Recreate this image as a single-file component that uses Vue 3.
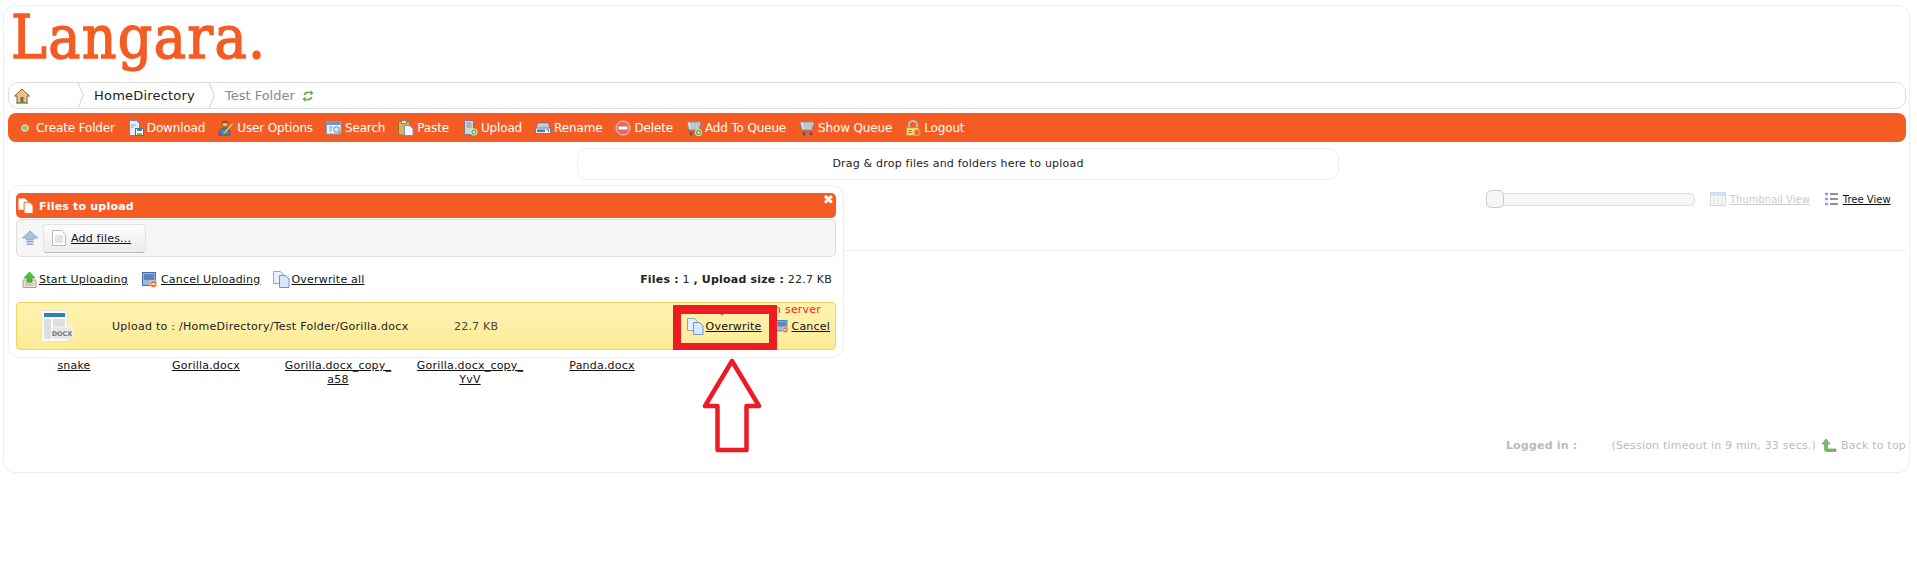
<script setup>
const tools = [
  { icon: 'dot', label: 'Create Folder' },
  { icon: 'download', label: 'Download' },
  { icon: 'user', label: 'User Options' },
  { icon: 'search', label: 'Search' },
  { icon: 'paste', label: 'Paste' },
  { icon: 'upload', label: 'Upload' },
  { icon: 'rename', label: 'Rename' },
  { icon: 'delete', label: 'Delete' },
  { icon: 'cartadd', label: 'Add To Queue' },
  { icon: 'cart', label: 'Show Queue' },
  { icon: 'lock', label: 'Logout' }
]

const files = [
  ['snake'],
  ['Gorilla.docx'],
  ['Gorilla.docx_copy_', 'a58'],
  ['Gorilla.docx_copy_', 'YvV'],
  ['Panda.docx']
]
</script>

<template>
  <svg class="sprite" aria-hidden="true">
    <defs>
      <symbol id="dot" viewBox="0 0 16 16">
        <rect x="5" y="5" width="6" height="6" rx="2" fill="#8fc96f" stroke="#e8f4d8" />
      </symbol>
      <symbol id="download" viewBox="0 0 16 16">
        <path d="M1.500.5h7l3 3v12h-10z" fill="#e4eefb" stroke="#5b8ac6" />
        <path d="M3 5h5M3 7h3" stroke="#7da4d8" />
        <rect x="7.500" y="8.500" width="8" height="7" fill="#fff" stroke="#3f74b5" />
        <rect x="9" y="9" width="5" height="2" fill="#4a7fc1" />
        <rect x="9" y="13" width="5" height="2" fill="#7cc04f" />
      </symbol>
      <symbol id="user" viewBox="0 0 16 16">
        <circle cx="7" cy="4" r="3" fill="#e9b77f" stroke="#8a5a2b" />
        <path d="M5 1.500h5L9 3H5z" fill="#7a4a1f" />
        <path d="M1 15c0-5 2.500-7 6-7s5 2 5 7z" fill="#4a7fc1" stroke="#2c5a94" />
        <path d="M15.500 4l-8 9-2.500 2 1-3 8-9z" fill="#f6cf55" stroke="#a87a1c" stroke-width=".7" />
      </symbol>
      <symbol id="search" viewBox="0 0 16 16">
        <rect x=".5" y="1.500" width="14.500" height="12.500" fill="#f2f6fc" stroke="#7a9cc8" />
        <rect x="1" y="2" width="13.500" height="3" fill="#6c98d0" />
        <path d="M3 7h4M3 9h3M3 11h3" stroke="#7a9cc8" />
        <circle cx="10.500" cy="9.500" r="2.800" fill="#dcebf9" stroke="#6a7f96" />
        <path d="M12.500 11.500l3 3" stroke="#8c8f7f" stroke-width="1.400" />
      </symbol>
      <symbol id="paste" viewBox="0 0 16 16">
        <rect x=".5" y="1.500" width="11" height="13.500" rx="1" fill="#dcae66" stroke="#9c6e2a" />
        <rect x="3.500" y=".5" width="5" height="3" fill="#e6e1cf" stroke="#8d8470" />
        <path d="M6.500 5.500h5l3.500 3v7h-8.500z" fill="#f4f8fe" stroke="#6c93c9" />
      </symbol>
      <symbol id="upload" viewBox="0 0 16 16">
        <rect x="2.500" y=".5" width="9" height="14" rx="1" fill="#cfd3d8" stroke="#737a82" />
        <path d="M4.500 3h5M4.500 5h5M4.500 7h5" stroke="#8b929a" />
        <circle cx="12" cy="12" r="3.200" fill="#58a83c" stroke="#e4f3da" />
        <path d="M10.500 12h3M12 10.500v3" stroke="#fff" />
      </symbol>
      <symbol id="rename" viewBox="0 0 16 16">
        <path d="M.5 11l2-8h11l2 8z" fill="#d5dce4" stroke="#6f7b88" />
        <rect x="3" y="5" width="10" height="2" fill="#bfc8d2" />
        <rect x=".5" y="8" width="15" height="5.500" fill="#eef1f4" stroke="#6f7b88" />
        <rect x="2" y="9.500" width="8" height="2.500" fill="#4a79b3" />
        <path d="M11.500 9.500h2v2.500" fill="none" stroke="#6f7b88" />
      </symbol>
      <symbol id="delete" viewBox="0 0 16 16">
        <circle cx="8" cy="8" r="7" fill="#e06a66" stroke="#f5cfc8" />
        <rect x="3.500" y="6.500" width="9" height="3" fill="#fff" />
      </symbol>
      <symbol id="cart" viewBox="0 0 16 16">
        <path d="M1 2h14l-2 8H3z" fill="#dfe4e8" stroke="#7f8a93" />
        <path d="M3.500 4h10M4 6h9M4.500 8h8M6 2v8M9 2v8M12 2v8" stroke="#98a2aa" stroke-width=".6" />
        <path d="M3 10l.5 2h10" fill="none" stroke="#6a737b" />
        <circle cx="5" cy="14" r="1.400" fill="#4b5359" />
        <circle cx="12" cy="14" r="1.400" fill="#4b5359" />
      </symbol>
      <symbol id="cartadd" viewBox="0 0 16 16">
        <use href="#cart" width="16" height="16" />
        <circle cx="12.500" cy="12.500" r="3.200" fill="#58a83c" stroke="#e4f3da" />
        <path d="M11 12.500h3M12.500 11v3" stroke="#fff" />
      </symbol>
      <symbol id="lock" viewBox="0 0 16 16">
        <path d="M4 8V5a4 4 0 0 1 8 0v3" fill="none" stroke="#b8bec4" stroke-width="2" />
        <rect x="1.500" y="7.500" width="12" height="8" fill="#f4d468" stroke="#c19a2b" />
        <path d="M3.500 10.500h3M3.500 12.500h3" stroke="#9c7a1c" />
        <circle cx="12" cy="12.500" r="3" fill="#e2701f" stroke="#f7c9a3" stroke-width=".6" />
      </symbol>
      <symbol id="pages" viewBox="0 0 17 17">
        <path d="M.5.500h7l3 3v9h-10z" fill="#e8f0fb" stroke="#86a8d6" />
        <path d="M6.500 4.500h6l3.500 3.500v8.500h-9.500z" fill="#dbe8f9" stroke="#6d94cc" />
      </symbol>
      <symbol id="cancel" viewBox="0 0 16 16">
        <rect x=".5" y=".5" width="13" height="13" fill="#9fb9d8" stroke="#3f6fa8" />
        <rect x="2" y="2" width="10" height="6" fill="#5b87bb" />
        <circle cx="11.500" cy="12" r="3.500" fill="#e2701f" stroke="#fff" stroke-width=".6" />
        <rect x="9.500" y="11.300" width="4" height="1.400" fill="#fff" />
      </symbol>
    </defs>
  </svg>

  <div class="frame">
    <div class="logo">Langara.</div>

    <div class="crumbs">
      <svg class="home" viewBox="0 0 16 16" width="16" height="16">
        <path d="M8 1L.5 8h2.500v6.500h10V8h2.500z" fill="#e8c48a" stroke="#8a5a2b" />
        <path d="M2 15h12" stroke="#5fa83c" stroke-width="1.500" />
        <rect x="6.500" y="9" width="3" height="5" fill="#7a6a4a" />
      </svg>
      <svg class="chev first" viewBox="0 0 7 30" width="7" height="27">
        <path d="M.5 0L6.500 15L.5 30" fill="none" stroke="#ccc" />
      </svg>
      <span class="crumb">HomeDirectory</span>
      <svg class="chev" viewBox="0 0 7 30" width="7" height="27">
        <path d="M.5 0L6.500 15L.5 30" fill="none" stroke="#ccc" />
      </svg>
      <span class="crumb current">Test Folder</span>
      <svg class="refresh" viewBox="0 0 12 14" width="12" height="14">
        <path d="M1.500 6C2 3 5 1.500 8.500 3V1L11.500 4 8.500 6.500V4.500C6 3.500 4 4.500 3.500 6z" fill="#6aa84f" />
        <path d="M10.500 8C10 11 7 12.500 3.500 11V13L.5 10 3.500 7.500V9.500C6 10.500 8 9.500 8.500 8z" fill="#6aa84f" />
      </svg>
    </div>

    <div class="toolbar">
      <a v-for="tool in tools" :key="tool.label" class="tool">
        <svg class="tool-icon" viewBox="0 0 16 16" width="16" height="16">
          <use :href="'#' + tool.icon" width="16" height="16" />
        </svg>
        {{ tool.label }}
      </a>
    </div>

    <div class="dropzone">Drag &amp; drop files and folders here to upload</div>

    <div class="views">
      <div class="slider"><span class="handle"></span></div>
      <a class="view dim">
        <svg viewBox="0 0 16 14" width="16" height="14">
          <rect x=".5" y=".5" width="15" height="13" fill="#f4f7fb" stroke="#cfdbea" />
          <rect x="1" y="1" width="14" height="3" fill="#d5e2f2" />
          <path d="M3 6h2M7 6h2M11 6h2M3 9h2M7 9h2M11 9h2M3 12h2M7 12h2M11 12h2" stroke="#eadfae" />
        </svg>
        <span>Thumbnail View</span>
      </a>
      <a class="view">
        <svg viewBox="0 0 14 14" width="14" height="14">
          <path d="M0 2h3M0 7h3M0 12h3" stroke="#7fa6dd" stroke-width="2.400" />
          <path d="M5 2h8M5 7h8M5 12h8" stroke="#222" />
        </svg>
        <span>Tree View</span>
      </a>
    </div>

    <div class="divider"></div>

    <div class="file-grid">
      <a v-for="(file, i) in files" :key="i" class="file">
        <span v-for="line in file" :key="line">{{ line }}</span>
      </a>
    </div>

    <div class="footer">
      <b>Logged in :</b>
      <span class="session">(Session timeout in 9 min, 33 secs.)</span>
      <svg viewBox="0 0 16 14" width="16" height="14">
        <path d="M5 1L1 6h2.500v5.500a2 2 0 0 0 2 2H15v-2.500H7.500a1 1 0 0 1-1-1V6H9z" fill="#7dbb6a" stroke="#4d9440" stroke-width=".6" />
      </svg>
      <span>Back to top</span>
    </div>

    <div class="uploader">
      <div class="up-title">
        <svg viewBox="0 0 17 17" width="16" height="16">
          <path d="M.5.500h7l3 3v9h-10z" fill="#fff" />
          <path d="M6.500 4.500h6l3.500 3.500v8.500h-9.500z" fill="#fff" stroke="#f45c24" />
        </svg>
        Files to upload
        <span class="close">✖</span>
      </div>
      <div class="up-bar">
        <svg viewBox="0 0 16 16" width="16" height="16">
          <path d="M8 1L.5 8h4v2h7V8h4z" fill="#a9c2de" stroke="#8fa9c6" />
          <rect x="4.500" y="11" width="7" height="1.500" fill="#8fa9c6" />
          <rect x="4.500" y="13.500" width="7" height="1.500" fill="#8fa9c6" />
        </svg>
        <a class="add-btn">
          <svg viewBox="0 0 14 16" width="14" height="16">
            <path d="M.5.500h9l4 4v11H.5z" fill="#fff" stroke="#bbb" />
            <path d="M3 6h8M3 8h8M3 10h8M3 12h8" stroke="#ccc" />
          </svg>
          <span>Add files...</span>
        </a>
      </div>
      <div class="up-actions">
        <a class="act">
          <svg viewBox="0 0 15 17" width="15" height="17">
            <path d="M1 9h13v7.500H1z" fill="#ece7d6" stroke="#a8a08a" />
            <path d="M3 12h9M3 14h9" stroke="#b8b09a" />
            <path d="M7.500 1L2 7h3v4h5V7h3z" fill="#4cc02e" stroke="#2e8f1a" stroke-width=".6" />
          </svg>
          <span>Start Uploading</span>
        </a>
        <a class="act wide cancel-all">
          <svg viewBox="0 0 16 16" width="16" height="16"><use href="#cancel" width="16" height="16" /></svg>
          <span>Cancel Uploading</span>
        </a>
        <a class="act overwrite-all">
          <svg viewBox="0 0 17 17" width="17" height="17"><use href="#pages" width="17" height="17" /></svg>
          <span>Overwrite all</span>
        </a>
        <div class="totals"><b>Files :</b> 1 <b>, Upload size :</b> 22.7 KB</div>
      </div>
      <div class="up-item">
        <svg class="doc" viewBox="0 0 32 32" width="32" height="32">
          <rect x=".5" y=".5" width="26" height="31" rx="1" fill="#fafafa" stroke="#e2e2e2" />
          <rect x="3" y="3" width="21" height="4" fill="#2d84a8" />
          <rect x="3" y="9" width="7" height="20" fill="#dedede" />
          <rect x="12" y="9" width="12" height="8" fill="#dedede" />
          <rect x="11" y="17" width="20.500" height="12" rx="3" fill="#e6e6e6" stroke="#f5f5f5" />
          <text x="21" y="26" class="doc-ext">DOCX</text>
        </svg>
        <span class="path">Upload to : /HomeDirectory/Test Folder/Gorilla.docx</span>
        <span class="size">22.7 KB</span>
        <div class="item-side">
          <div class="exists">Already exists on server</div>
          <div class="item-acts">
            <a class="act">
              <svg viewBox="0 0 17 17" width="17" height="17"><use href="#pages" width="17" height="17" /></svg>
              <span>Overwrite</span>
            </a>
            <a class="act wide">
              <svg viewBox="0 0 16 16" width="13" height="13"><use href="#cancel" width="16" height="16" /></svg>
              <span>Cancel</span>
            </a>
          </div>
        </div>
      </div>
    </div>

    <div class="mark-box"></div>
    <svg class="mark-arrow" viewBox="0 0 60 96" width="60" height="96">
      <path d="M30 3L3 48H15.500V92H44.500V48H57z" fill="#fff" stroke="#ed1c24" stroke-width="4.500" stroke-linejoin="round" />
    </svg>
  </div>
</template>

<style>
body {
  background: #fff;
}
</style>

<style scoped>
.sprite {
  position: absolute;
  width: 0;
  height: 0;
}

.frame {
  position: relative;
  box-sizing: border-box;
  width: 1907px;
  height: 468px;
  margin: 5px 0 0 3px;
  padding: 0 3px 0 4px;
  border: 1px solid #eee;
  border-radius: 12px;
  font-family: "DejaVu Sans", Verdana, sans-serif;
  font-size: 11px;
  letter-spacing: 0.2px;
  color: #222;
}

a {
  color: #111;
}

.logo {
  height: 76px;
  padding-left: 3px;
  font-family: "DejaVu Serif Condensed", "DejaVu Serif", serif;
  font-size: 60px;
  line-height: 62px;
  letter-spacing: 1.35px;
  -webkit-text-stroke: 1.4px #f45c24;
  color: #f45c24;
}

.crumbs {
  display: flex;
  align-items: center;
  box-sizing: border-box;
  height: 27px;
  padding-left: 5px;
  border: 1px solid #ddd;
  border-radius: 10px;
  font-size: 13px;
  overflow: hidden;
}

.chev.first {
  margin-left: 47px;
}

.crumb {
  margin: 0 13px 0 10px;
}

.crumb.current {
  margin-right: 7px;
  letter-spacing: 0;
  color: #888;
}

.toolbar {
  display: flex;
  align-items: center;
  gap: 13px;
  height: 29px;
  margin-top: 4px;
  padding-left: 9px;
  border-radius: 8px;
  background: #f45c24;
  font-size: 12px;
  letter-spacing: -0.15px;
  color: #fff;
}

.tool {
  display: flex;
  align-items: center;
  gap: 3px;
  color: #fff;
  white-space: nowrap;
}

.dropzone {
  box-sizing: border-box;
  width: 762px;
  height: 32px;
  margin: 6px 0 0 569px;
  border: 1px solid #eee;
  border-radius: 10px;
  line-height: 29px;
  text-align: center;
}

.views {
  display: flex;
  align-items: center;
  height: 20px;
  margin-top: 9px;
  padding-left: 1478px;
  letter-spacing: 0;
}

.slider {
  position: relative;
  box-sizing: border-box;
  width: 209px;
  height: 13px;
  border: 1px solid #ddd;
  border-radius: 5px;
  background: #f7f7f7;
}

.handle {
  position: absolute;
  left: -1px;
  top: -4px;
  box-sizing: border-box;
  width: 18px;
  height: 18px;
  border: 1px solid #ccc;
  border-radius: 5px;
  background: #f5f5f5;
}

.view {
  display: flex;
  align-items: center;
  gap: 4px;
  margin-left: 15px;
  font-size: 10px;
  text-decoration: underline;
}

.view.dim {
  color: #ccc;
}

.divider {
  height: 1px;
  margin-top: 41px;
  background: #eee;
}

.file-grid {
  display: flex;
  margin-top: 108px;
}

.file {
  display: flex;
  flex-direction: column;
  width: 132px;
  line-height: 14px;
  text-align: center;
  text-decoration: underline;
}

.footer {
  position: absolute;
  right: 3px;
  top: 432px;
  display: flex;
  align-items: center;
  color: #bbb;
}

.footer b {
  margin-right: 34px;
}

.footer svg {
  margin: 0 4px 0 5px;
}

.uploader {
  position: absolute;
  left: 4px;
  top: 179px;
  box-sizing: border-box;
  width: 836px;
  height: 173px;
  padding: 7px;
  border: 1px solid #eee;
  border-radius: 12px;
  background: #fff;
}

.up-title {
  position: relative;
  display: flex;
  align-items: center;
  gap: 5px;
  height: 25px;
  padding: 1px 0 0 2px;
  box-sizing: border-box;
  border-radius: 5px;
  background: #f45c24;
  font-weight: bold;
  color: #fff;
}

.close {
  position: absolute;
  right: 2px;
  top: -1px;
  font-size: 13px;
}

.up-bar {
  display: flex;
  align-items: center;
  gap: 5px;
  box-sizing: border-box;
  height: 38px;
  margin-top: 1px;
  padding-left: 5px;
  border: 1px solid #ddd;
  border-radius: 5px;
  background: #f6f6f6;
}

.add-btn {
  display: flex;
  align-items: center;
  gap: 5px;
  box-sizing: border-box;
  height: 29px;
  padding: 0 14px 0 8px;
  border: 1px solid #e4e4e4;
  border-bottom-color: #bbb;
  border-radius: 4px;
  background: linear-gradient(#fdfdfd, #ececec);
  text-decoration: underline;
}

.up-actions {
  display: flex;
  align-items: center;
  height: 45px;
  padding: 0 4px 0 6px;
}

.act {
  display: flex;
  align-items: center;
  gap: 2px;
  margin-right: 14px;
  text-decoration: underline;
}

.act.wide {
  gap: 3px;
}

.act.cancel-all {
  margin-right: 13px;
}

.act.overwrite-all {
  gap: 1px;
}

.totals {
  margin-left: auto;
}

.up-item {
  display: flex;
  align-items: center;
  box-sizing: border-box;
  height: 48px;
  padding-left: 24px;
  border: 1px solid #f4d45c;
  border-radius: 4px;
  background: linear-gradient(#fff3b0, #feeb97);
}

.doc-ext {
  font-size: 6.500px;
  font-weight: bold;
  letter-spacing: 0;
  text-anchor: middle;
  fill: #777;
}

.path {
  margin-left: 39px;
  width: 342px;
  letter-spacing: 0.27px;
}

.size {
  color: #444;
}

.item-side {
  align-self: flex-start;
  margin-left: auto;
  margin-right: 5px;
}

.exists {
  margin-right: 9px;
  line-height: 14px;
  text-align: right;
  color: #f22;
}

.item-acts {
  display: flex;
  align-items: center;
  justify-content: flex-end;
  margin-top: 1px;
}

.item-acts .act {
  margin-right: 0;
  margin-left: 14px;
}

.mark-box {
  position: absolute;
  left: 669px;
  top: 299px;
  box-sizing: border-box;
  width: 104px;
  height: 45px;
  border: solid #ed1c24;
  border-width: 9px 8px 7px;
}

.mark-arrow {
  position: absolute;
  left: 698px;
  top: 352px;
}
</style>
